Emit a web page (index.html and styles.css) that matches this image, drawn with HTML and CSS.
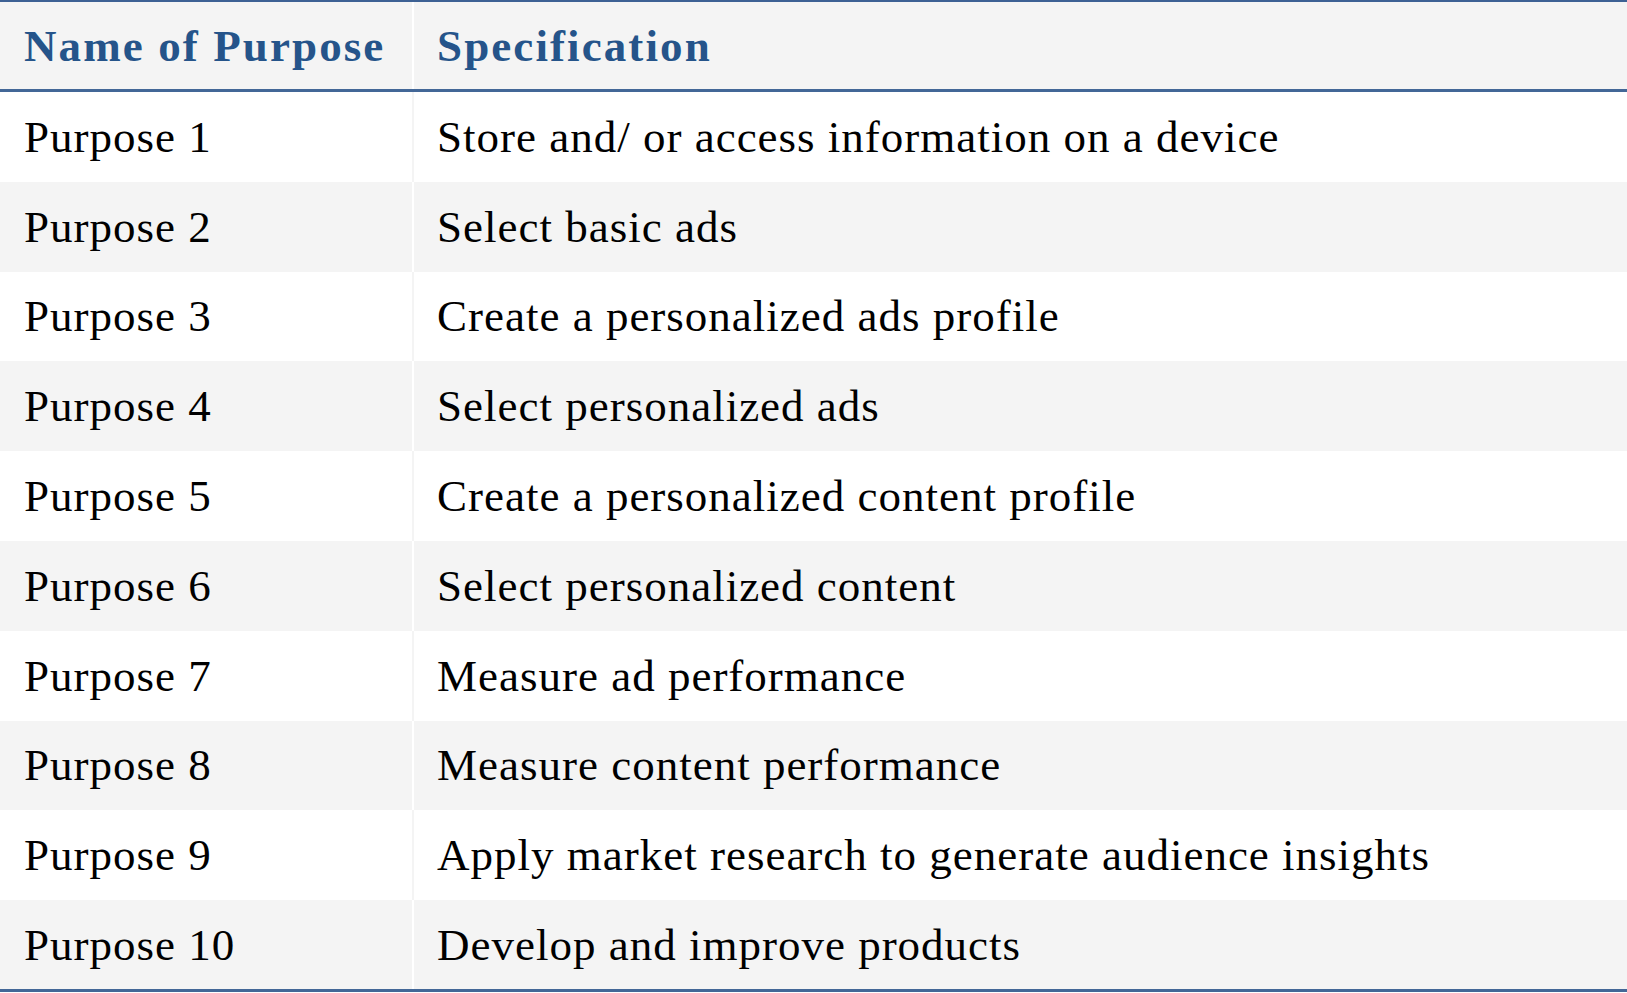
FILE: index.html
```html
<!DOCTYPE html>
<html lang="en">
<head>
<meta charset="utf-8">
<title>Purposes</title>
<link rel="stylesheet" href="styles.css">
</head>
<body>
<div class="table">
  <div class="row head">
    <div class="cell name">Name of Purpose</div>
    <div class="cell spec">Specification</div>
  </div>
  <div class="row odd"><div class="cell name">Purpose 1</div><div class="cell spec">Store and/ or access information on a device</div></div>
  <div class="row even"><div class="cell name">Purpose 2</div><div class="cell spec">Select basic ads</div></div>
  <div class="row odd"><div class="cell name">Purpose 3</div><div class="cell spec">Create a personalized ads profile</div></div>
  <div class="row even"><div class="cell name">Purpose 4</div><div class="cell spec">Select personalized ads</div></div>
  <div class="row odd"><div class="cell name">Purpose 5</div><div class="cell spec">Create a personalized content profile</div></div>
  <div class="row even"><div class="cell name">Purpose 6</div><div class="cell spec">Select personalized content</div></div>
  <div class="row odd"><div class="cell name">Purpose 7</div><div class="cell spec">Measure ad performance</div></div>
  <div class="row even"><div class="cell name">Purpose 8</div><div class="cell spec">Measure content performance</div></div>
  <div class="row odd"><div class="cell name">Purpose 9</div><div class="cell spec">Apply market research to generate audience insights</div></div>
  <div class="row even last"><div class="cell name">Purpose 10</div><div class="cell spec">Develop and improve products</div></div>
</div>
</body>
</html>
```
FILE: styles.css
```css
html, body {
  margin: 0;
  padding: 0;
  background: #ffffff;
}
.table {
  width: 1627px;
  display: flex;
  flex-direction: column;
  font-family: "Liberation Serif", "Times New Roman", serif;
  color: #000;
}
.row {
  display: flex;
  align-items: stretch;
  height: 89.8px;
}
.row.head {
  height: 87px;
  border-top: 2px solid #3d6194;
  border-bottom: 3px solid #436797;
  background: #f4f4f4;
}
.row.head .cell {
  color: #25548a;
  font-weight: bold;
  font-size: 45px;
  letter-spacing: 2.1px;
}
.row.odd { background: #ffffff; }
.row.even { background: #f4f4f4; }
.row.last {
  height: 88.8px;
  border-bottom: 3px solid #436797;
}
.cell {
  display: flex;
  align-items: center;
  font-size: 45px;
  letter-spacing: 1px;
  box-sizing: border-box;
}
.cell.name {
  width: 414px;
  padding-left: 24px;
  border-right: 2px solid #ffffff;
}
.row.odd .cell.name { border-right-color: #f4f4f4; }
.cell.spec {
  flex: 1;
  padding-left: 23px;
}
```
